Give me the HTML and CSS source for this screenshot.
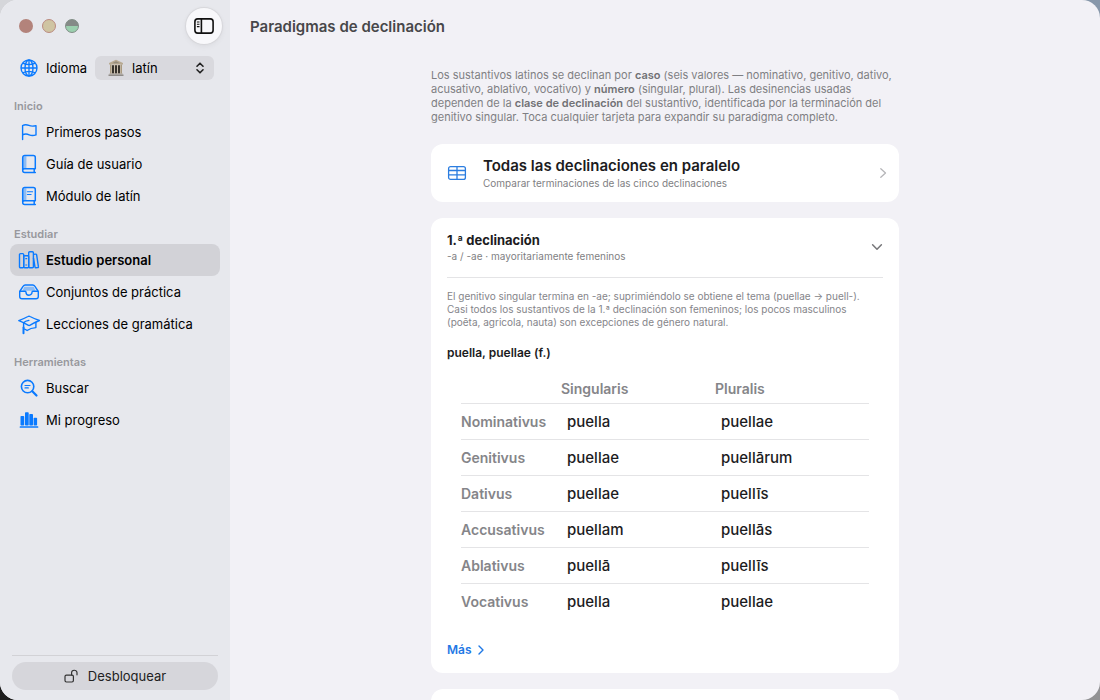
FILE: index.html
```html
<!DOCTYPE html>
<html lang="es">
<head>
<meta charset="utf-8">
<meta name="viewport" content="width=device-width, initial-scale=1">
<title>Paradigmas de declinación</title>
<link rel="stylesheet" href="styles.css">
</head>
<body>
<div class="window">
  <aside class="sidebar">
    <div class="titlebar">
      <div class="lights">
        <button class="light light-close" type="button" aria-label="Cerrar"></button>
        <button class="light light-min" type="button" aria-label="Minimizar"></button>
        <button class="light light-max" type="button" aria-label="Ampliar"></button>
      </div>
      <button class="toggle" type="button" aria-label="Barra lateral">
        <svg width="20" height="16" viewBox="0 0 20 16" fill="none" stroke="#111" stroke-width="1.6"><rect x="0.9" y="0.9" width="18.2" height="14.2" rx="2.8"/><path d="M7.4 1v14"/><path d="M2.9 4h2.6M2.9 6.3h2.6M2.9 8.6h2.6" stroke-width="1.1"/></svg>
      </button>
    </div>

    <div class="language">
      <svg class="icon" viewBox="0 0 22 22" fill="none" stroke="#0a7aff" stroke-width="1.35"><circle cx="11" cy="11" r="8"/><ellipse cx="11" cy="11" rx="4" ry="8"/><path d="M11 3v16M3 11h16M4.7 6.2c3.6 1.7 9 1.7 12.6 0M4.7 15.8c3.6-1.7 9-1.7 12.6 0"/></svg>
      <label for="lang">Idioma</label>
      <div class="picker">
        <select id="lang"><option>latín</option></select>
        <svg class="picker-temple" width="16" height="18" viewBox="0 0 16 18"><path d="M8 .8 15 4v1.600H1V4z" fill="#b8aa92"/><path d="M8 2.200 12 4.200H4z" fill="#938a7c"/><path d="M2 5.600h12v9H2z" fill="#cabfae"/><path d="M4.100 6.200h1.800v8.200H4.100zM7.100 6.200h1.800v8.200H7.100zM10.100 6.200h1.800v8.200h-1.800z" fill="#26231f"/><path d="M2 5.600h1.300v9H2zM12.700 5.600H14v9h-1.300z" fill="#a8997f"/><path d="M1.400 14.400h13.200v1.200H1.400z" fill="#aaa092"/><path d="M.5 15.400h15v1.500H.5z" fill="#8f8c88"/></svg>
        <svg class="picker-arrows" width="8" height="12" viewBox="0 0 8 12" fill="none" stroke="#222" stroke-width="1.6" stroke-linecap="round" stroke-linejoin="round"><path d="M1 4.200 4 1.200l3 3M1 7.800l3 3 3-3"/></svg>
      </div>
    </div>

    <nav class="nav">
      <section>
        <h2>Inicio</h2>
        <a href="#primeros"><svg class="icon" viewBox="0 0 22 22" fill="none" stroke="#0a7aff" stroke-width="1.4" stroke-linecap="round" stroke-linejoin="round"><path d="M4.600 18.600V4.500c2.300-1.200 4.200-1 6.300-.1s4.200 1 7.100.2v9.300c-2.300.8-4.600.9-6.800-.1s-4.400-1.100-6.600.1"/></svg>Primeros pasos</a>
        <a href="#guia"><svg class="icon" viewBox="0 0 22 22" fill="none" stroke="#0a7aff" stroke-width="1.5" stroke-linejoin="round" stroke-linecap="round"><path d="M5 3.200h3.400v12.200H5z" fill="#8dbcf4" stroke="none"/><path d="M17.300 15.700V4.500a2 2 0 0 0-2-2H6.700a2 2 0 0 0-2 2v13a2 2 0 0 0 2 2h10.600M17.300 15.700H6.600a1.900 1.900 0 0 0-1.900 1.900M16.200 15.800v3.600"/></svg>Guía de usuario</a>
        <a href="#modulo"><svg class="icon" viewBox="0 0 22 22" fill="none" stroke="#0a7aff" stroke-width="1.5" stroke-linejoin="round" stroke-linecap="round"><path d="M5 3.200h3.400v12.200H5z" fill="#8dbcf4" stroke="none"/><path d="M17.300 15.700V4.500a2 2 0 0 0-2-2H6.700a2 2 0 0 0-2 2v13a2 2 0 0 0 2 2h10.600M17.300 15.700H6.600a1.900 1.900 0 0 0-1.900 1.900M16.200 15.800v3.600"/><path d="M9.400 6.700h5.200M9.400 9.500h3.700" stroke-width="1.100"/></svg>Módulo de latín</a>
      </section>
      <section>
        <h2>Estudiar</h2>
        <a class="selected" href="#estudio" aria-current="page"><svg class="icon" viewBox="0 0 22 22" fill="none" stroke="#0a7aff" stroke-width="1.400" stroke-linejoin="round"><rect x="1.500" y="4.600" width="4.200" height="14.200" rx="1"/><rect x="5.700" y="6.800" width="5" height="12" rx="1"/><path d="M7.300 9.600h1.900M7.300 16h1.900" stroke-width="1.100"/><rect x="10.700" y="2.700" width="4.700" height="16.100" rx="1"/><path d="m15.500 5.400 2.300-.3c.4 0 .7.200.8.600l1.800 12c.1.500-.1.800-.6.900l-1.900.2c-.5.100-.8-.2-.9-.7L15.500 9"/></svg>Estudio personal</a>
        <a href="#conjuntos"><svg class="icon" viewBox="0 0 22 22" fill="none" stroke="#0a7aff" stroke-width="1.400" stroke-linejoin="round"><path d="M6.300 5.700h9.400l1.800 4H4.500z" fill="#8dbcf4" stroke="none"/><path d="M1.700 10.500 5.200 5.200c.5-.8 1-1.200 2-1.200h7.600c1 0 1.500.4 2 1.200l3.500 5.300v5c0 1.500-.8 2.300-2.300 2.300H4c-1.500 0-2.300-.8-2.300-2.300z"/><path d="M1.800 10.300h5.300c.6 0 .9.400.9.900a3 3 0 0 0 6 0c0-.5.300-.9.900-.9h5.300"/></svg>Conjuntos de práctica</a>
        <a href="#lecciones"><svg class="icon" viewBox="0 0 22 22" fill="none" stroke="#0a7aff" stroke-width="1.400" stroke-linejoin="round" stroke-linecap="round"><path d="M.800 7.600c3.400-1.300 6.400-2.600 9.200-4.100.7-.4 1.300-.4 2 0 2.900 1.500 5.800 2.700 9.400 4-3.300 1.400-6.300 2.800-9.200 4.600-.8.500-1.400.5-2.200 0C7.200 10.300 4.200 8.900.8 7.600z"/><path d="M17.900 9.400v5.200c-3.700.200-6.300 1-8.800 2.900-1-.7-1.600-1-2.500-1.400M10.900 7.400c-2.500.4-4.100 1-5.300 2.400v5"/><path d="M5.500 14.500v5.800" stroke-width="2"/></svg>Lecciones de gramática</a>
      </section>
      <section>
        <h2>Herramientas</h2>
        <a href="#buscar"><svg class="icon" viewBox="0 0 22 22" fill="none" stroke="#0a7aff" stroke-linecap="round"><circle cx="9.600" cy="9.600" r="6.200" stroke-width="1.600"/><path d="m14.300 14.300 4.200 4.200" stroke-width="2.200"/><path d="M7 8.500h5M7 10.900h3.300" stroke-width="1.200"/></svg>Buscar</a>
        <a href="#progreso"><svg class="icon" viewBox="0 0 22 22" fill="#0a7aff"><rect x="2.500" y="7" width="3.700" height="9.500" rx=".8"/><rect x="7" y="3.200" width="3.700" height="13.300" rx=".8"/><rect x="11.300" y="5" width="3.700" height="11.500" rx=".8"/><rect x="15.600" y="8.800" width="3.500" height="7.700" rx=".8"/><rect x="1.700" y="17.300" width="18.600" height="1.400" rx=".5"/></svg>Mi progreso</a>
      </section>
    </nav>

    <div class="sidebar-foot">
      <button class="unlock" type="button">
        <svg width="14" height="14" viewBox="0 0 14 14" fill="none" stroke="#333" stroke-width="1.200" stroke-linecap="round"><rect x="1" y="6.100" width="8.400" height="6.900" rx="1.400"/><path d="M7.600 6V3.800c0-3.400 5.400-3.400 5.400 0v2"/></svg>
        Desbloquear
      </button>
    </div>
  </aside>

  <main class="main">
    <header class="main-head"><h1>Paradigmas de declinación</h1></header>
    <div class="content">
      <p class="intro">Los sustantivos latinos se declinan por <b>caso</b> (seis valores — nominativo, genitivo, dativo, acusativo, ablativo, vocativo) y <b>número</b> (singular, plural). Las desinencias usadas dependen de la <b>clase de declinación</b> del sustantivo, identificada por la terminación del genitivo singular. Toca cualquier tarjeta para expandir su paradigma completo.</p>

      <a class="card compare" href="#paralelo">
        <svg width="20" height="16" viewBox="0 0 20 16" fill="none" stroke="#2b7de0" stroke-width="1.300"><rect x="1.600" y="1.600" width="16.800" height="12.800" rx="2"/><path d="M1.600 5.500h16.800M1.600 9.900h16.800M10 1.600v12.800"/></svg>
        <span class="compare-text">
          <span class="compare-title">Todas las declinaciones en paralelo</span>
          <span class="caption">Comparar terminaciones de las cinco declinaciones</span>
        </span>
        <svg width="8" height="12" viewBox="0 0 8 12" fill="none" stroke="#b5b5b8" stroke-width="1.300" stroke-linecap="round" stroke-linejoin="round"><path d="m1.800 1.800 4.700 4.200-4.700 4.200"/></svg>
      </a>

      <article class="card paradigm">
        <button class="paradigm-head" type="button" aria-expanded="true">
          <span>
            <span class="strong">1.ª declinación</span>
            <span class="caption">-a / -ae · mayoritariamente femeninos</span>
          </span>
          <svg width="12" height="8" viewBox="0 0 12 8" fill="none" stroke="#77777a" stroke-width="1.500" stroke-linecap="round" stroke-linejoin="round"><path d="m1.600 1.700 4.400 4.600 4.400-4.600"/></svg>
        </button>
        <p class="note">El genitivo singular termina en -ae; suprimiéndolo se obtiene el tema (puellae → puell-). Casi todos los sustantivos de la 1.ª declinación son femeninos; los pocos masculinos (poēta, agricola, nauta) son excepciones de género natural.</p>
        <h3 class="lemma">puella, puellae (f.)</h3>
        <table class="forms">
          <thead><tr><td></td><th scope="col">Singularis</th><th scope="col">Pluralis</th></tr></thead>
          <tbody>
            <tr><th scope="row">Nominativus</th><td>puella</td><td>puellae</td></tr>
            <tr><th scope="row">Genitivus</th><td>puellae</td><td>puellārum</td></tr>
            <tr><th scope="row">Dativus</th><td>puellae</td><td>puellīs</td></tr>
            <tr><th scope="row">Accusativus</th><td>puellam</td><td>puellās</td></tr>
            <tr><th scope="row">Ablativus</th><td>puellā</td><td>puellīs</td></tr>
            <tr><th scope="row">Vocativus</th><td>puella</td><td>puellae</td></tr>
          </tbody>
        </table>
        <a class="more" href="#mas">Más <svg width="6" height="10" viewBox="0 0 6 10" fill="none" stroke="#1f78e5" stroke-width="1.400" stroke-linecap="round" stroke-linejoin="round"><path d="m1 1 4 4-4 4"/></svg></a>
      </article>

      <article class="card next"></article>
    </div>
  </main>
</div>
</body>
</html>
```
FILE: styles.css
```css
* { box-sizing: border-box; }

body {
  margin: 0;
  font-family: Inter, "Liberation Sans", sans-serif;
  font-size: 13px;
  line-height: 16px;
  color: #1c1c1e;
  background:
    linear-gradient(#d5d6da, #d5d6da) left top / 50% 50% no-repeat,
    linear-gradient(#8797aa, #8797aa) right top / 50% 50% no-repeat,
    linear-gradient(#1d1d1d, #1d1d1d) left bottom / 50% 50% no-repeat,
    linear-gradient(#929294, #929294) right bottom / 50% 50% no-repeat;
}

h1, h2, h3, p { margin: 0; }
a { color: inherit; text-decoration: none; }
button, select { font: inherit; color: inherit; border: 0; padding: 0; background: none; }
svg { display: block; flex: none; }

.window {
  display: flex;
  height: 100vh;
  border-radius: 18px;
  overflow: hidden;
  background: #f2f1f6;
}

/* Sidebar */
.sidebar {
  display: flex;
  flex-direction: column;
  flex: none;
  width: 230px;
  background: #e7e8ed;
  color: #000;
}

.titlebar {
  display: flex;
  align-items: center;
  justify-content: space-between;
  height: 52px;
  padding: 0 8px 0 19px;
}
.lights { display: flex; gap: 9px; }
.light { width: 14px; height: 14px; border-radius: 50%; }
.light-close { background: #b3837b; }
.light-min { background: #cfc4a2; border: 1px solid #bb8b80; }
.light-max { background: linear-gradient(#858a87 50%, #9bcfae 50%); border: 1px solid #7f8c84; }
.toggle {
  display: grid;
  place-items: center;
  width: 36px;
  height: 36px;
  border-radius: 50%;
  background: #f8f8fb;
  box-shadow: 0 0 1px 1px #d6d6da, 0 2px 6px rgba(0, 0, 0, .06);
}

.icon { width: 22px; height: 22px; }

.language {
  display: flex;
  align-items: center;
  height: 32px;
  padding: 0 16px 0 18px;
}
.language label { margin-left: 6px; }
.picker { position: relative; flex: 1; margin-left: 8px; }
.picker select {
  appearance: none;
  display: block;
  width: 100%;
  height: 24px;
  padding: 0 24px 0 37px;
  border-radius: 6px;
  background: #d9d9de;
}
.picker-temple { position: absolute; left: 13px; top: 3px; pointer-events: none; }
.picker-arrows { position: absolute; right: 10px; top: 6px; pointer-events: none; }

.nav {
  flex: 1;
  display: flex;
  flex-direction: column;
  gap: 12px;
  padding: 12px 10px;
  min-height: 0;
  overflow: hidden;
}
.nav h2 {
  height: 20px;
  padding-left: 4px;
  font-size: 11px;
  line-height: 20px;
  font-weight: 600;
  color: #98989d;
}
.nav a {
  display: flex;
  align-items: center;
  gap: 6px;
  height: 32px;
  padding: 0 8px;
  border-radius: 8px;
  white-space: nowrap;
}
.nav .selected { background: #d2d2d7; font-weight: 600; }

.sidebar-foot {
  margin: 0 12px;
  padding: 6px 0 10px;
  border-top: 1px solid #d2d2d6;
}
.unlock {
  display: flex;
  align-items: center;
  justify-content: center;
  gap: 10px;
  width: 100%;
  height: 28px;
  border-radius: 14px;
  background: #d6d6db;
  color: #222;
}

/* Main pane */
.main { flex: 1; min-width: 0; overflow: hidden; }
.main-head { display: flex; align-items: center; height: 54px; padding: 0 20px; }
.main-head h1 { font-size: 15px; line-height: 20px; font-weight: 600; color: #47474a; }

.content {
  display: flex;
  flex-direction: column;
  gap: 16px;
  max-width: 500px;
  margin: 0 auto;
  padding: 14px 16px;
}
.intro {
  padding-bottom: 4px;
  font-size: 11px;
  line-height: 14px;
  color: #7f7f83;
}
.intro b { font-weight: 600; color: #717175; }

.card { border-radius: 12px; background: #fff; }

.compare {
  display: flex;
  align-items: center;
  gap: 16px;
  min-height: 58px;
  padding: 8px 12px 8px 16px;
}
.compare-text { flex: 1; }
.compare-title {
  display: block;
  font-size: 15px;
  line-height: 20px;
  font-weight: 600;
}
.caption {
  display: block;
  font-size: 10px;
  line-height: 14px;
  color: #7f7f83;
}

.paradigm { padding: 13px 16px; }
.paradigm-head {
  display: flex;
  align-items: center;
  justify-content: space-between;
  width: 100%;
  padding: 0 0 14px;
  border-bottom: 1px solid #e4e4e6;
  text-align: left;
}
.strong { display: block; font-size: 13px; line-height: 18px; font-weight: 700; }
.note {
  margin-top: 12px;
  padding-right: 12px;
  font-size: 10px;
  line-height: 13px;
  color: #85858a;
}
.lemma { margin-top: 16px; font-size: 12px; line-height: 16px; font-weight: 600; }

.forms {
  width: calc(100% - 28px);
  margin: 14px 14px 23px;
  border-collapse: collapse;
  table-layout: fixed;
  font-size: 15px;
  line-height: 20px;
}
.forms th, .forms td { height: 36px; padding: 2px 0 0; text-align: left; }
.forms thead td { width: 100px; }
.forms thead th, .forms thead td { height: 28px; padding: 0; }
.forms th { font-size: 14px; font-weight: 600; color: #858589; }
.forms tbody td { padding-left: 6px; font-weight: 500; }
.forms tbody tr { border-top: 1px solid #e4e4e6; }

.more {
  display: flex;
  align-items: center;
  gap: 6px;
  width: max-content;
  margin-bottom: 2px;
  font-size: 12px;
  font-weight: 600;
  color: #1f78e5;
}

.next { min-height: 72px; }
```
